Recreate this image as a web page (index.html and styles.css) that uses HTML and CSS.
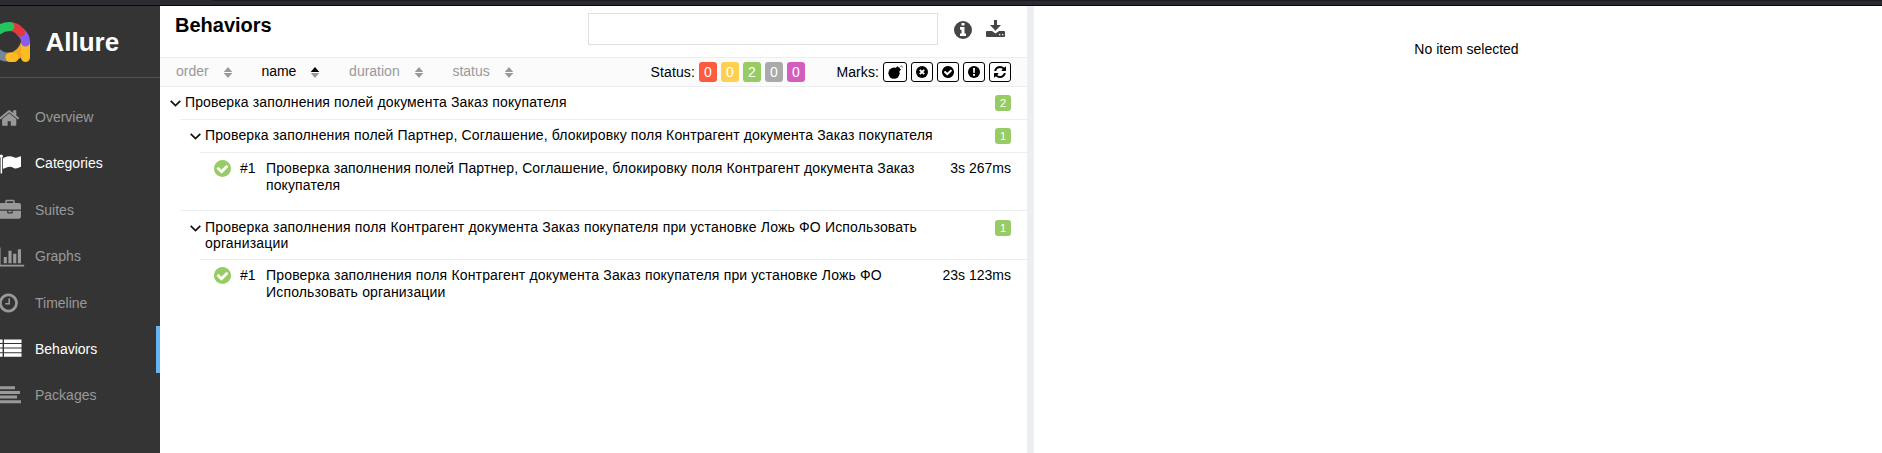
FILE: index.html
```html
<!DOCTYPE html>
<html lang="ru">
<head>
<meta charset="utf-8">
<title>Allure Report</title>
<link rel="stylesheet" href="styles.css">
</head>
<body>
<svg class="defs" width="0" height="0" aria-hidden="true">
  <symbol id="check" viewBox="128 128 1536 1536"><path d="M1412 734q0-28-18-46l-91-90q-19-19-45-19t-45 19l-408 407-226-226q-19-19-45-19t-45 19l-91 90q-18 18-18 46 0 27 18 45l362 362q19 19 45 19 27 0 46-19l543-543q18-18 18-45zm252 162q0 209-103 385.5t-279.5 279.5-385.5 103-385.5-103-279.5-279.5-103-385.5 103-385.5 279.5-279.5 385.5-103 385.5 103 279.5 279.5 103 385.5z"/></symbol>
  <symbol id="sort" viewBox="0 0 8 11"><path d="M4 0 8.300 5H-.3z"/><path d="M-.3 6h8.600L4 11z"/></symbol>
  <symbol id="chevron" viewBox="0 0 11 7"><path d="M.7 .8l4.800 4.800L10.300 .8" fill="none" stroke="#111" stroke-width="1.700"/></symbol>
</svg>
<div class="browser-edge"><div class="browser-tab"></div></div>
<div class="app">
  <nav class="side">
    <div class="brand">
      <svg class="logo" viewBox="0 0 30 42" fill="none" stroke-width="9" stroke-linecap="round">
        <path d="M-2 32.500A15.500 15.500 0 0 0 9 36" stroke="#78869a"/>
        <path d="M10 36Q21 35 25.500 22" stroke="#f0a81c"/>
        <path d="M25.500 23V36.500" stroke="#fdbb23"/>
        <path d="M10 36.500H14" stroke="#fdbb23"/>
        <path d="M20.500 11Q25.500 15 25.500 21" stroke="#8b5cf0"/>
        <path d="M10 5.500Q16.500 6 20.500 11" stroke="#e5383b"/>
        <path d="M-3 10Q3 5.500 10 5.500" stroke="#22c55e"/>
      </svg>
      <span class="brand-name">Allure</span>
    </div>
    <a class="nav-item"><svg class="nav-icon" viewBox="64 0 1792 1792"><path d="M1472 992v480q0 26-19 45t-45 19h-384v-384h-256v384h-384q-26 0-45-19t-19-45v-480q0-1 .5-3t.5-3l575-474 575 474q1 2 1 6zm223-69l-62 74q-8 9-21 11h-3q-13 0-21-7l-692-577-692 577q-12 8-24 7-13-2-21-11l-62-74q-8-10-7-23.500t11-21.500l719-599q32-26 76-26t76 26l244 204v-195q0-14 9-23t23-9h192q14 0 23 9t9 23v408l219 182q10 8 11 21.500t-7 23.500z"/></svg>Overview</a>
    <a class="nav-item lit"><svg class="nav-icon" viewBox="0 0 1792 1792"><path d="M320 256q0 72-64 110v1266q0 13-9.500 22.500t-22.500 9.500h-64q-13 0-22.500-9.500t-9.500-22.500v-1266q-64-38-64-110 0-53 37.500-90.500t90.500-37.500 90.500 37.500 37.500 90.500zm1472 64v763q0 25-12.500 38.500t-39.500 27.500q-215 116-369 116-61 0-123.500-22t-108.500-48-115.500-48-142.500-22q-192 0-464 146-17 9-33 9-26 0-45-19t-19-45v-742q0-32 31-55 21-14 79-43 236-120 421-120 107 0 200 29t219 88q38 19 88 19 54 0 117.500-21t110-47 88-47 54.500-21q26 0 45 19t19 45z"/></svg>Categories</a>
    <a class="nav-item"><svg class="nav-icon" viewBox="0 -64 1792 1792"><path d="M640 256h512v-128h-512v128zm1152 640v480q0 66-47 113t-113 47h-1472q-66 0-113-47t-47-113v-480h672v160q0 26 19 45t45 19h320q26 0 45-19t19-45v-160h672zm-768 0v128h-256v-128h256zm768-480v384h-1792v-384q0-66 47-113t113-47h352v-160q0-40 28-68t68-28h576q40 0 68 28t28 68v160h352q66 0 113 47t47 113z"/></svg>Suites</a>
    <a class="nav-item"><svg class="nav-icon" viewBox="0 0 1792 1792"><path d="M640 896v512h-256v-512h256zm384-512v1024h-256v-1024h256zm1024 1152v128h-2048v-1536h128v1408h1920zm-640-896v768h-256v-768h256zm384-384v1152h-256v-1152h256z"/></svg>Graphs</a>
    <a class="nav-item"><svg class="nav-icon" viewBox="128 0 1792 1792"><path d="M1024 544v448q0 14-9 23t-23 9h-320q-14 0-23-9t-9-23v-64q0-14 9-23t23-9h224v-352q0-14 9-23t23-9h64q14 0 23 9t9 23zm416 352q0-148-73-273t-198-198-273-73-273 73-198 198-73 273 73 273 198 198 273 73 273-73 198-198 73-273zm224 0q0 209-103 385.500t-279.500 279.500-385.500 103-385.500-103-279.500-279.500-103-385.500 103-385.500 279.500-279.500 385.500-103 385.500 103 279.500 279.500 103 385.500z"/></svg>Timeline</a>
    <a class="nav-item lit active"><svg class="nav-icon" viewBox="0 0 22 22"><path d="M0 .4h3.600v3.600H0zM5 .4h17.500v3.600H5zM0 5h3.600v3.600H0zM5 5h17.500v3.600H5zM0 9.600h3.600v3.600H0zM5 9.600h17.500v3.600H5zM0 14.200h3.600v3.600H0zM5 14.200h17.500v3.600H5z"/></svg>Behaviors</a>
    <a class="nav-item"><svg class="nav-icon" viewBox="0 0 22 22"><path d="M0 1.200h16v3H0zM0 5.900h21v3H0zM0 10.500h18v3H0zM0 15.200h22v3H0z"/></svg>Packages</a>
  </nav>
  <main class="tree-pane">
    <header class="pane-head">
      <h1 class="title">Behaviors</h1>
      <input class="search" type="text" aria-label="Search">
      <svg class="info" viewBox="128 128 1536 1536"><path fill-rule="evenodd" d="M1152 1376v-160q0-14-9-23t-23-9h-96v-512q0-14-9-23t-23-9h-320q-14 0-23 9t-9 23v160q0 14 9 23t23 9h96v320h-96q-14 0-23 9t-9 23v160q0 14 9 23t23 9h448q14 0 23-9t9-23zm-128-896v-160q0-14-9-23t-23-9h-192q-14 0-23 9t-9 23v160q0 14 9 23t23 9h192q14 0 23-9t9-23zM1664 896a768 768 0 1 1-1536 0a768 768 0 1 1 1536 0z"/></svg>
      <svg class="download" viewBox="0 0 19 17"><path fill-rule="evenodd" d="M8 0h3v5h4L9.500 10.800 4 5H8zM0 12q0-1 1-1h5l3.500 2.500 3.500-2.500h5q1 0 1 1v4q0 1-1 1H1q-1 0-1-1zM13 14v1.300h1.300V14zM16 14v1.300h1.300V14z"/></svg>
    </header>
    <div class="toolbar">
      <div class="sorters">
        <span class="sorter">order<svg class="sort"><use href="#sort"/></svg></span>
        <span class="sorter on">name<svg class="sort" viewBox="0 0 8 11"><path d="M4 0 8.300 5H-.3z"/><path d="M-.3 6h8.600L4 11z" fill="#999"/></svg></span>
        <span class="sorter">duration<svg class="sort"><use href="#sort"/></svg></span>
        <span class="sorter">status<svg class="sort"><use href="#sort"/></svg></span>
      </div>
      <div class="filters">
        <span class="filter-label">Status:</span>
        <span class="count failed">0</span><span class="count broken">0</span><span class="count passed">2</span><span class="count skipped">0</span><span class="count unknown">0</span>
      </div>
      <div class="filters marks">
        <span class="filter-label">Marks:</span>
        <span class="mark wide"><svg class="bomb" viewBox="0 0 15 14"><circle cx="6" cy="8.200" r="5.600"/><path d="M7.500 3 9.500 1.300 13 4.500l-1.800 2z"/><path d="M11.300 2.800q.7-1.800 2.700-2l.5 2" fill="none" stroke="#888" stroke-width="1"/></svg></span>
        <span class="mark"><svg class="glyph" viewBox="0 0 12 12"><circle cx="6" cy="6" r="6"/><path d="M3.800 3.800l4.400 4.400M8.200 3.800L3.800 8.200" stroke="#fff" stroke-width="1.900"/></svg></span>
        <span class="mark"><svg class="glyph"><use href="#check"/></svg></span>
        <span class="mark"><svg class="glyph" viewBox="0 0 12 12"><circle cx="6" cy="6" r="6"/><path d="M5 2h2l-.3 5H5.300zM5 8h2v1.800H5z" fill="#fff"/></svg></span>
        <span class="mark"><svg class="glyph" viewBox="128 128 1536 1536"><path d="M1639 1056q0 5-1 7-64 268-268 434.500t-478 166.500q-146 0-282.500-55t-243.500-157l-129 129q-19 19-45 19t-45-19-19-45v-448q0-26 19-45t45-19h448q26 0 45 19t19 45-19 45l-137 137q71 66 161 102t187 36q134 0 250-65t186-179q11-17 53-117 8-23 30-23h192q13 0 22.500 9.500t9.500 22.500zm25-800v448q0 26-19 45t-45 19h-448q-26 0-45-19t-19-45 19-45l138-138q-148-137-349-137-134 0-250 65t-186 179q-11 17-53 117-8 23-30 23h-199q-13 0-22.500-9.500t-9.500-22.500v-7q65-268 270-434.500t480-166.500q146 0 284 55.500t245 156.500l130-129q19-19 45-19t45 19 19 45z"/></svg></span>
      </div>
    </div>
    <div class="tree">
      <div class="group root"><svg class="chevron"><use href="#chevron"/></svg><span class="name">Проверка заполнения полей документа Заказ покупателя</span><span class="badge">2</span></div>
      <div class="level">
        <div class="group"><svg class="chevron"><use href="#chevron"/></svg><span class="name">Проверка заполнения полей Партнер, Соглашение, блокировку поля Контрагент документа Заказ покупателя</span><span class="badge">1</span></div>
        <div class="level">
          <div class="leaf first"><svg class="ok"><use href="#check"/></svg><span class="num">#1</span><span class="leaf-name">Проверка заполнения полей Партнер, Соглашение, блокировку поля Контрагент документа Заказ покупателя</span><span class="time">3s 267ms</span></div>
        </div>
        <div class="group tall"><svg class="chevron"><use href="#chevron"/></svg><span class="name loose">Проверка заполнения поля Контрагент документа Заказ покупателя при установке Ложь ФО Использовать организации</span><span class="badge">1</span></div>
        <div class="level">
          <div class="leaf"><svg class="ok"><use href="#check"/></svg><span class="num">#1</span><span class="leaf-name loose">Проверка заполнения поля Контрагент документа Заказ покупателя при установке Ложь ФО Использовать организации</span><span class="time">23s 123ms</span></div>
        </div>
      </div>
    </div>
  </main>
  <div class="gutter"></div>
  <section class="detail">No item selected</section>
</div>
</body>
</html>
```
FILE: styles.css
```css
* { box-sizing: border-box; }
body {
  margin: 0;
  height: 453px;
  overflow: hidden;
  display: flex;
  flex-direction: column;
  background: #fff;
  color: #000;
  font: 14px/17px "Liberation Sans", Arial, sans-serif;
}
svg { display: block; flex: none; fill: currentColor; }
.defs { display: none; }
.browser-edge { height: 6px; flex: none; background: #2b2a33; border-bottom: 1px solid #08070c; }
.browser-tab { height: 1px; margin-left: 213px; background: #1c1b22; }
.app { display: flex; flex: 1; min-height: 0; }

/* Navigation */
.side { width: 160px; flex: none; background: #343434; color: #999; overflow: hidden; }
.brand { height: 72px; display: flex; border-bottom: 1px solid #505050; margin-bottom: 16.400px; }
.logo { width: 30px; height: 42px; margin-top: 15px; }
.brand-name { margin: 19px 0 0 15.500px; color: #fff; font-weight: bold; font-size: 26px; line-height: 34px; }
.nav-item { height: 46.400px; display: flex; align-items: center; gap: 14px; border-right: 4px solid transparent; }
.nav-icon { width: 22px; height: 22px; margin-left: -1px; overflow: visible; }
.nav-item.lit { color: #fff; }
.nav-item.active { border-right-color: #64b5f6; }

/* Tree pane */
.tree-pane { width: 867px; flex: none; }
.pane-head { height: 51px; display: flex; padding-left: 15px; }
.title { margin: 7px 0 0; width: 413px; font-size: 20px; line-height: 24px; }
.search { width: 350px; height: 32px; margin-top: 7px; border: 1px solid #e0e0e0; background: #fff; padding: 0 8px; }
.info { width: 18px; height: 18px; margin: 15px 0 0 16px; color: #454545; }
.download { width: 19px; height: 17px; margin: 14px 0 0 14px; color: #454545; }

.toolbar { height: 30px; display: flex; align-items: center; padding: 0 16px; background: #fbfbfb; border: solid #eceff1; border-width: 1px 0; }
.sorters { display: flex; gap: 29.700px; flex: 1; color: #999; }
.sorter { display: flex; align-items: center; gap: 15px; margin-top: -1px; }
.sorter.on { color: #000; }
.sort { width: 8px; height: 11px; margin-top: 2px; overflow: visible; }
.filters { display: flex; align-items: center; gap: 4px; }
.filter-label { letter-spacing: .1px; }
.marks { margin-left: 31.500px; }
.count { width: 18px; height: 20px; border-radius: 3px; color: #fff; text-align: center; line-height: 20px; }
.failed { background: #fd5a3e; }
.broken { background: #ffd050; }
.passed { background: #97cc64; }
.skipped { background: #aaa; }
.unknown { background: #d35ebe; }
.mark { width: 22px; height: 20px; display: flex; align-items: center; justify-content: center; border: 1px solid #000; border-radius: 3px; background: #fff; }
.mark.wide { width: 24px; }
.glyph { width: 12px; height: 12px; }
.bomb { width: 15px; height: 14px; }

.level { padding-left: 20px; }
.group { display: flex; min-height: 33px; padding: 7px 16px 0 10px; line-height: 16px; border-top: 1px solid #eceff1; }
.group.root { min-height: 32px; border-top: 0; }
.group.tall { min-height: 49px; padding-top: 8px; }
.chevron { width: 11px; height: 7px; margin: 6px 4px 0 0; }
.name { flex: 1; margin-right: 40px; letter-spacing: .125px; }
.badge { width: 16px; height: 16px; margin-top: 1px; border-radius: 3px; background: #97cc64; color: #fff; font-size: 11px; text-align: center; }
.leaf { display: flex; padding: 7px 16px 0 14px; border-top: 1px solid #eceff1; }
.leaf.first { height: 58px; }
.ok { width: 17px; height: 17px; margin: 0 9px 0 0; color: #97cc64; }
.num { width: 26px; }
.leaf-name { flex: 1; margin-right: 20px; letter-spacing: .115px; }
.name.loose, .leaf-name.loose { letter-spacing: .165px; }

.gutter { width: 7px; flex: none; background: #eceff1; }
.detail { flex: 1; padding: 35px 0 0 17px; text-align: center; }
```
